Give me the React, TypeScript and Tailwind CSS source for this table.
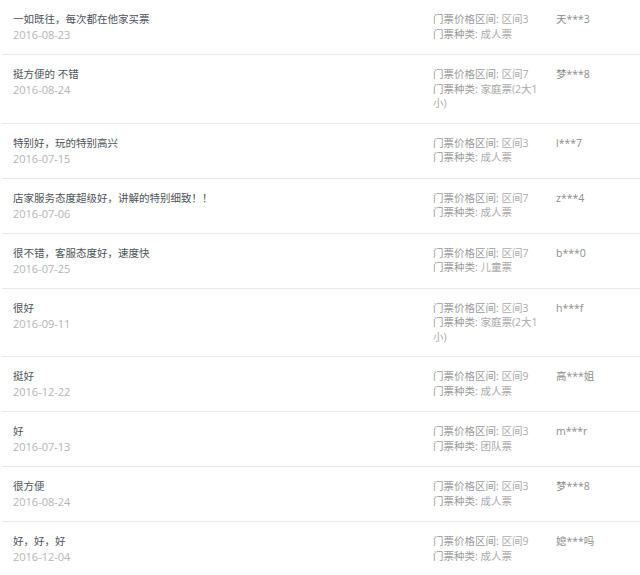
const reviews = [
  { text: "一如既往，每次都在他家买票", date: "2016-08-23", range: "区间3", kind: "成人票", user: "天***3" },
  { text: "挺方便的 不错", date: "2016-08-24", range: "区间7", kind: "家庭票(2大1小)", user: "梦***8" },
  { text: "特别好，玩的特别高兴", date: "2016-07-15", range: "区间3", kind: "成人票", user: "l***7" },
  { text: "店家服务态度超级好，讲解的特别细致！！", date: "2016-07-06", range: "区间7", kind: "成人票", user: "z***4" },
  { text: "很不错，客服态度好，速度快", date: "2016-07-25", range: "区间7", kind: "儿童票", user: "b***0" },
  { text: "很好", date: "2016-09-11", range: "区间3", kind: "家庭票(2大1小)", user: "h***f" },
  { text: "挺好", date: "2016-12-22", range: "区间9", kind: "成人票", user: "高***姐" },
  { text: "好", date: "2016-07-13", range: "区间3", kind: "团队票", user: "m***r" },
  { text: "很方便", date: "2016-08-24", range: "区间3", kind: "成人票", user: "梦***8" },
  { text: "好，好，好", date: "2016-12-04", range: "区间9", kind: "成人票", user: "媳***吗" },
];

export default function App() {
  return (
    <div
      className="min-h-screen bg-white pl-[2px] text-[10.5px]"
      style={{ fontFamily: '"Open Sans", "Noto Sans CJK SC", sans-serif' }}
    >
      {reviews.map((r, i) => (
        <div
          key={i}
          className="flex items-start border-b border-[#e8e9ee] pt-[12px] pb-[12px]"
        >
          {/* 评价内容 */}
          <div className="flex-1 pl-[11px] leading-[15px]">
            <div className="text-[#4c5359]">{r.text}</div>
            <div className="text-[11px] text-[#b4b4b4]">{r.date}</div>
          </div>

          {/* 门票信息 */}
          <div className="w-[110px] leading-[14.5px] text-[#9a9a9a]">
            <div>
              门票价格区间: <span className="text-[#aaaaaa]">{r.range}</span>
            </div>
            <div>
              门票种类: <span className="text-[#aaaaaa]">{r.kind}</span>
            </div>
          </div>

          {/* 用户 */}
          <div className="ml-[13px] w-[84px] leading-[15px] text-[#8c8c8c]">
            {r.user}
          </div>
        </div>
      ))}
    </div>
  );
}
